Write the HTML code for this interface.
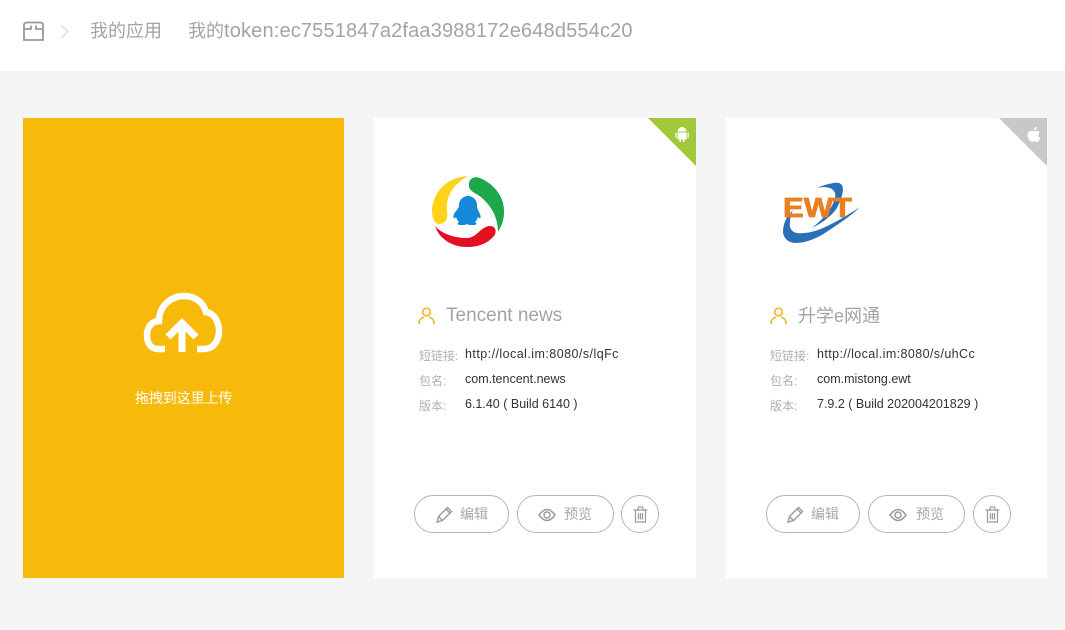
<!DOCTYPE html>
<html lang="zh"><head><meta charset="utf-8"><title>我的应用</title>
<style>
*{box-sizing:border-box}
html,body{margin:0;padding:0}
body{width:1065px;height:630px;position:relative;overflow:hidden;background:#f5f5f5;font-family:"Liberation Sans","Noto Sans CJK SC",sans-serif}
.a{position:absolute;white-space:nowrap}
.hd{left:0;top:0;width:1065px;height:72px;background:#fff;border-bottom:1px solid #f2f2f2}
.card{top:118px;height:460px;background:#fff}
.t{font-size:18px;line-height:24px;color:#a3a3a3}
.l{font-size:12px;line-height:16px;color:#b0b0b0}
.v{font-size:12.5px;line-height:16px;color:#333}
.btn{top:495px;height:38px;border:1px solid #b5b5b5;border-radius:19px;background:#fff}
.bt{font-size:14px;line-height:18px;color:#a8a8a8;top:505px}
svg{position:absolute;overflow:visible}
</style></head><body>
<div class="a hd"></div>
<svg style="left:23px;top:21px" width="21" height="20" viewBox="0 0 21 20" fill="none" stroke="#999" stroke-width="1.800"><path d="M1 19V4Q1 1.500 4 1.500H17Q20 1.500 20 4V19ZM1 8H8V4.500M20 8H13V4.500"/></svg>
<svg style="left:60px;top:24px" width="9" height="15" viewBox="0 0 9 15" fill="none" stroke="#dcdcdc" stroke-width="1.400"><path d="M1 1L8 7.500L1 14"/></svg>
<div class="a t" style="left:90px;top:19px">我的应用</div>
<div class="a t" style="left:188px;top:19px">我的<span style="font-size:20px;letter-spacing:.16px">token:ec7551847a2faa3988172e648d554c20</span></div>

<div class="a card" style="left:23px;width:321px;background:#f7b90a"></div>
<svg style="left:143px;top:292px" width="80" height="61" viewBox="0 0 80 61" fill="none" stroke="#fff" stroke-width="6.500"><path d="M22 57H15C7 57 4 50 4 43C4 35 9 29 16 29C16 14 28 4 41 4C52 4 60 10 63 20C71 21 76 30 76 39C76 49 70 57 61 57H54"/><path d="M39 60V30M25 45L39 31L53 45" stroke-width="7"/></svg>
<div class="a" style="left:135px;top:390px;font-size:14px;line-height:16px;color:#fff;width:100px;letter-spacing:-.1px">拖拽到这里上传</div>

<div class="a card" style="left:374px;width:322px"></div>
<svg style="left:648px;top:118px" width="48" height="48"><path d="M0 0H48V48Z" fill="#a1c83a"/><path d="M29.500 13.500A4.500 4.500 0 0 1 38.500 13.500ZM29.500 14.500H38.500V21.500H36.500V24H35V21.500H33V24H31.500V21.500H29.500ZM27.300 14.500H28.500V20H27.300ZM39.500 14.500H40.700V20H39.500Z" fill="#fff"/></svg>
<svg style="left:431px;top:175px" width="74" height="74" viewBox="0 0 74 74">
<path d="M7 49C2 47 1 40 1 35C2 17 16 2 37 1C26 7 18 16 16 28C15 36 20 47 9 49Z" fill="#ffd31a"/>
<path d="M38 9C38 3 44 1 49 3C63 9 74 22 73 38C73 45 70 52 67 57C67 42 60 31 51 23C46 18 37 17 38 9Z" fill="#1fa84a"/>
<path d="M4 51C11 59 24 63 36 63C46 63 50 51 59 51C65 51 66 57 63 61C56 69 47 72 36 72C20 72 8 63 4 51Z" fill="#e50f22"/>
<path d="M37 21C42 21 46 25 46 30C46 34 47 35 49 39C50 42 50 44 48 43L47 42C46 45 45 46 44 47C47 49 45 50 42 50H38L36 49L34 50H30C27 50 25 49 28 47C27 46 26 45 25 42L24 43C22 44 22 42 23 39C25 35 28 34 28 30C28 25 32 21 37 21Z" fill="#1588d8"/>
</svg>
<svg style="left:418px;top:307px" width="17" height="18" viewBox="0 0 17 18" fill="none" stroke="#f2b92e" stroke-width="1.700"><circle cx="8.500" cy="5" r="3.800"/><path d="M1 17V16C1 13 3 11 6 10M16 17V16C16 13 14 11 11 10"/></svg>
<div class="a t" style="left:446px;top:304px;font-size:19px">Tencent news</div>
<div class="a l" style="left:419px;top:348px">短链接:</div><div class="a v" style="left:465px;top:346px;letter-spacing:.45px">http://local.im:8080/s/lqFc</div>
<div class="a l" style="left:419px;top:373px">包名:</div><div class="a v" style="left:465px;top:371px">com.tencent.news</div>
<div class="a l" style="left:419px;top:398px">版本:</div><div class="a v" style="left:465px;top:396px">6.1.40 ( Build 6140 )</div>
<div class="a btn" style="left:414px;width:95px"></div><div class="a btn" style="left:517px;width:97px"></div><div class="a btn" style="left:621px;width:38px"></div>
<svg style="left:436px;top:506px" width="17" height="17" viewBox="0 0 17 17" fill="none" stroke="#999" stroke-width="1.400"><path d="M1 16L2.500 10.500L11.500 1.500L15.500 5.500L6.500 14.500ZM2.500 10.500L6.500 14.500M10 3L14 7"/></svg>
<div class="a bt" style="left:460px">编辑</div>
<svg style="left:538px;top:508px" width="18" height="14" viewBox="0 0 18 14" fill="none" stroke="#999" stroke-width="1.500"><path d="M1 7C4 3 6.500 1.500 9 1.500C11.500 1.500 14 3 17 7C14 11 11.500 12.500 9 12.500C6.500 12.500 4 11 1 7Z"/><circle cx="9" cy="7" r="3"/></svg>
<div class="a bt" style="left:564px">预览</div>
<svg style="left:633px;top:506px" width="15" height="17" viewBox="0 0 15 17" fill="none" stroke="#999" stroke-width="1.200"><path d="M.5 4H14.500M4.500 4L5.500 1H9.500L10.500 4M2.500 4V16H12.500V4M5.500 7V13.500M7.500 7V13.500M9.500 7V13.500"/></svg>

<div class="a card" style="left:726px;width:321px"></div>
<svg style="left:999px;top:118px" width="48" height="48"><path d="M0 0H48V48Z" fill="#c8c8c8"/><path d="M34 13C32 12.500 28.500 13 28.500 17C28.500 20 31 24 33 24C34 24 34.500 23.300 35.500 23.300C36.500 23.300 37 24 38 24C39.500 24 40.800 21.500 41 20C39 19 38.800 16 40.800 14.500C39.500 12.500 37 12.500 35.500 13.300C35 13.500 34.500 13.300 34 13ZM34.800 12C35 10 36.500 9 38 8.800C38 10.500 36.500 12 34.800 12Z" fill="#fff"/></svg>
<svg style="left:782px;top:182px" width="78" height="63" viewBox="0 0 78 63">
<path d="M11 28C4 35 1 42 1 50C2 58 8 61 14 61C24 61 36 56 46 49C58 41 70 33 78 25C66 33 54 40 41 46C32 50 22 52 15 51C9 50 7 45 8 40C8 36 9 32 11 28Z" fill="#2a70b8"/>
<path d="M35 6C42 3 52 0 57 1C63 3 62 12 55 26C48 36 38 42 30 46C40 38 50 28 53 16C55 8 48 3 35 6Z" fill="#2a70b8"/>
<text x="1" y="35" font-family="Liberation Sans" font-weight="700" font-size="28" fill="#e8801e" stroke="#e8801e" stroke-width=".8" textLength="69" lengthAdjust="spacingAndGlyphs">EWT</text>
</svg>
<svg style="left:770px;top:307px" width="17" height="18" viewBox="0 0 17 18" fill="none" stroke="#f2b92e" stroke-width="1.700"><circle cx="8.500" cy="5" r="3.800"/><path d="M1 17V16C1 13 3 11 6 10M16 17V16C16 13 14 11 11 10"/></svg>
<div class="a t" style="left:798px;top:304px">升学e网通</div>
<div class="a l" style="left:770px;top:348px">短链接:</div><div class="a v" style="left:817px;top:346px;letter-spacing:.4px">http://local.im:8080/s/uhCc</div>
<div class="a l" style="left:770px;top:373px">包名:</div><div class="a v" style="left:817px;top:371px">com.mistong.ewt</div>
<div class="a l" style="left:770px;top:398px">版本:</div><div class="a v" style="left:817px;top:396px">7.9.2 ( Build 202004201829 )</div>
<div class="a btn" style="left:766px;width:94px"></div><div class="a btn" style="left:868px;width:97px"></div><div class="a btn" style="left:973px;width:38px"></div>
<svg style="left:787px;top:506px" width="17" height="17" viewBox="0 0 17 17" fill="none" stroke="#999" stroke-width="1.400"><path d="M1 16L2.500 10.500L11.500 1.500L15.500 5.500L6.500 14.500ZM2.500 10.500L6.500 14.500M10 3L14 7"/></svg>
<div class="a bt" style="left:811px">编辑</div>
<svg style="left:889px;top:508px" width="18" height="14" viewBox="0 0 18 14" fill="none" stroke="#999" stroke-width="1.500"><path d="M1 7C4 3 6.500 1.500 9 1.500C11.500 1.500 14 3 17 7C14 11 11.500 12.500 9 12.500C6.500 12.500 4 11 1 7Z"/><circle cx="9" cy="7" r="3"/></svg>
<div class="a bt" style="left:916px">预览</div>
<svg style="left:985px;top:506px" width="15" height="17" viewBox="0 0 15 17" fill="none" stroke="#999" stroke-width="1.200"><path d="M.5 4H14.500M4.500 4L5.500 1H9.500L10.500 4M2.500 4V16H12.500V4M5.500 7V13.500M7.500 7V13.500M9.500 7V13.500"/></svg>
</body></html>
